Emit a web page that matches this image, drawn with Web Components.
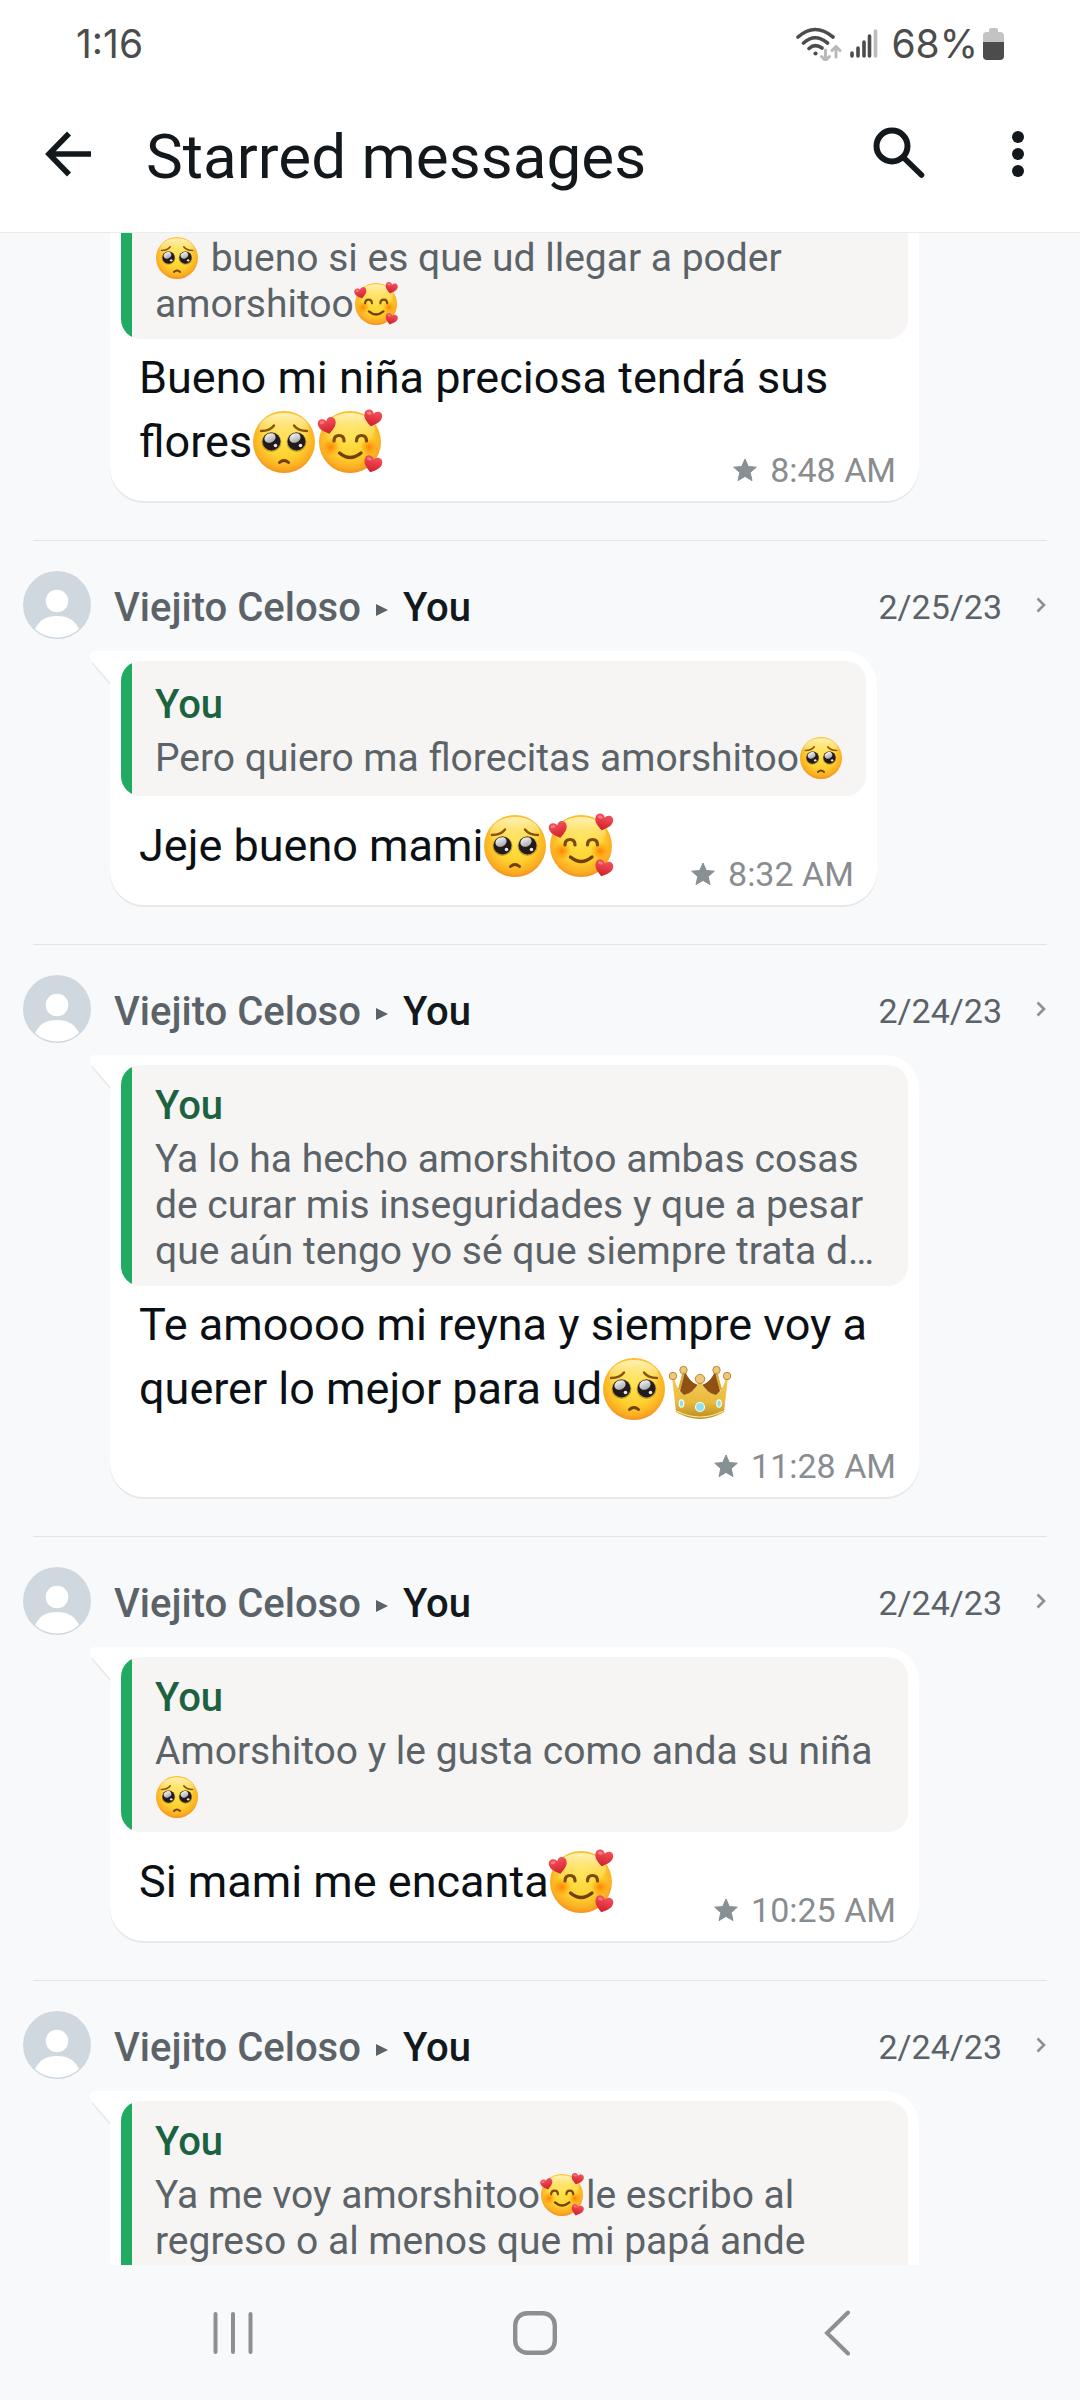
<!DOCTYPE html>
<html lang="es">
<head>
<meta charset="utf-8">
<meta name="viewport" content="width=device-width, initial-scale=1">
<title>Starred messages</title>
<style>
  html, body { margin: 0; height: 100%; }
  body {
    display: flex;
    flex-direction: column;
    overflow: hidden;
    background: #f7f9fb;
    color: #0b1014;
    font-family: Roboto, "Liberation Sans", sans-serif;
  }
</style>
</head>
<body>
<status-bar time="1:16" battery="68%"></status-bar>
<app-bar>Starred messages</app-bar>
<message-list>
  <starred-message continued time="8:48 AM"><quoted-message continued slot="quote"><emoji-icon name="pleading"></emoji-icon> bueno si es que ud llegar a poder amorshitoo<emoji-icon name="hearts"></emoji-icon></quoted-message>Bueno mi niña preciosa tendrá sus flores<emoji-icon name="pleading"></emoji-icon><emoji-icon name="hearts"></emoji-icon></starred-message>
  <starred-message from="Viejito Celoso" to="You" date="2/25/23" time="8:32 AM"><quoted-message author="You" slot="quote">Pero quiero ma florecitas amorshitoo<emoji-icon name="pleading"></emoji-icon></quoted-message>Jeje bueno mami<emoji-icon name="pleading"></emoji-icon><emoji-icon name="hearts"></emoji-icon></starred-message>
  <starred-message stacked from="Viejito Celoso" to="You" date="2/24/23" time="11:28 AM"><quoted-message author="You" slot="quote">Ya lo ha hecho amorshitoo ambas cosas de curar mis inseguridades y que a pesar que aún tengo yo sé que siempre trata d…</quoted-message>Te amoooo mi reyna y siempre voy a querer lo mejor para ud<emoji-icon name="pleading"></emoji-icon><emoji-icon name="crown"></emoji-icon></starred-message>
  <starred-message from="Viejito Celoso" to="You" date="2/24/23" time="10:25 AM"><quoted-message author="You" slot="quote">Amorshitoo y le gusta como anda su niña <emoji-icon name="pleading"></emoji-icon></quoted-message>Si mami me encanta<emoji-icon name="hearts"></emoji-icon></starred-message>
  <starred-message from="Viejito Celoso" to="You" date="2/24/23"><quoted-message open author="You" slot="quote">Ya me voy amorshitoo<emoji-icon name="hearts"></emoji-icon>le escribo al regreso o al menos que mi papá ande</quoted-message></starred-message>
</message-list>
<nav-bar></nav-bar>

<script>
const define = (name, render) => customElements.define(name, class extends HTMLElement {
  connectedCallback() {
    if (this.shadowRoot) return;
    this.attachShadow({ mode: 'open' }).innerHTML = render(this);
  }
});

const buttonReset = `button{appearance:none;border:0;margin:0;padding:0;background:none;color:inherit;font:inherit;display:flex;align-items:center;justify-content:center}svg{display:block}`;

/* ---- emoji drawings ---- */
const faceDefs = `<defs>
  <radialGradient id="face" cx=".5" cy=".42" r=".6"><stop offset="0" stop-color="#ffe24d"/><stop offset=".55" stop-color="#fdd22f"/><stop offset=".85" stop-color="#fbac22"/><stop offset="1" stop-color="#f08a1c"/></radialGradient>
  <linearGradient id="shine" x1="0" y1="0" x2="0" y2="1"><stop offset="0" stop-color="#fff6c8" stop-opacity=".9"/><stop offset="1" stop-color="#ffe66a" stop-opacity="0"/></linearGradient>
  <radialGradient id="blush"><stop offset="0" stop-color="#ff7a00" stop-opacity=".9"/><stop offset="1" stop-color="#ff8c00" stop-opacity="0"/></radialGradient>
  <linearGradient id="glint" x1="0" y1="0" x2="0" y2="1"><stop offset="0" stop-color="#f2f2f4"/><stop offset="1" stop-color="#a9a9ad"/></linearGradient>
  <linearGradient id="heart" x1="0" y1="0" x2="0" y2="1"><stop offset="0" stop-color="#f4525a"/><stop offset="1" stop-color="#cf1f2c"/></linearGradient>
  <linearGradient id="gold" x1="0" y1="0" x2="0" y2="1"><stop offset="0" stop-color="#f3cb55"/><stop offset=".6" stop-color="#e9bb3f"/><stop offset="1" stop-color="#b98a22"/></linearGradient>
</defs>`;
const face = `<circle cx="31" cy="31" r="31" fill="url(#face)"/><ellipse cx="31" cy="18" rx="25" ry="16" fill="url(#shine)"/>`;
const heart = (x, y, r) => `<g transform="translate(${x} ${y}) rotate(${r})"><path d="M0 8C-5 4.500-9 1.500-9-3.200C-9-6.500-6.800-8-4.600-8C-2.400-8-.8-6.800 0-5C.8-6.800 2.400-8 4.600-8C6.800-8 9-6.500 9-3.200C9 1.500 5 4.500 0 8Z" fill="url(#heart)"/><ellipse cx="-4.500" cy="-4.500" rx="2.500" ry="1.500" fill="#ff8d90" opacity=".7"/></g>`;
const emoji = {
  pleading: ['🥺', face + `
    <path d="M8 20Q17 20 21 14.500M54 20Q45 20 41 14.500" fill="none" stroke="#8a5208" stroke-width="2.400" stroke-linecap="round"/>
    <circle cx="18.500" cy="31" r="10" fill="#5a3a12" opacity=".35"/><circle cx="43.500" cy="31" r="10" fill="#5a3a12" opacity=".35"/>
    <circle cx="18.500" cy="30.500" r="9" fill="#231a1c"/><circle cx="43.500" cy="30.500" r="9" fill="#231a1c"/>
    <ellipse cx="17" cy="27" rx="5.800" ry="4.600" transform="rotate(-24 17 27)" fill="url(#glint)"/><ellipse cx="42" cy="27" rx="5.800" ry="4.600" transform="rotate(-24 42 27)" fill="url(#glint)"/>
    <circle cx="22.500" cy="34.500" r="1.800" fill="#e8e8ea"/><circle cx="47.500" cy="34.500" r="1.800" fill="#e8e8ea"/>
    <path d="M26.500 51.500Q31 47.500 35.500 51.500" fill="none" stroke="#704008" stroke-width="3" stroke-linecap="round"/>`],
  hearts: ['🥰', face + `
    <circle cx="12" cy="36" r="9" fill="url(#blush)"/><circle cx="50" cy="36" r="9" fill="url(#blush)"/>
    <path d="M15 30Q15 24.500 20 24.500T25 30M37.500 30Q37.500 24.500 42.500 24.500T47.500 30" fill="none" stroke="#7b4a0a" stroke-width="3.200" stroke-linecap="round"/>
    <path d="M20.500 42Q31 51 42 42" fill="none" stroke="#704008" stroke-width="3.400" stroke-linecap="round"/>`
    + heart(8.5, 15, -14) + heart(53.5, 7.5, 14) + heart(53.5, 53.5, 16)],
  crown: ['👑', `
    <path d="M14 13L11 33L17 40L29 27Q20 24 16 13ZM48 13L51 33L45 40L33 27Q42 24 46 13Z" fill="#8f5212"/>
    <path d="M15 13Q13 22 10 32M47 13Q49 22 52 32" fill="none" stroke="#d9a93a" stroke-width="2.500"/>
    <path d="M3 19L7 54Q31 68 55 54L59 19L57 19Q54 33 47 37Q37 35 32 24L30 24Q25 35 15 37Q8 33 5 19Z" fill="url(#gold)"/>
    <path d="M7.500 53Q31 65 54.500 53" fill="none" stroke="#ffe58a" stroke-width="1.200"/>
    <g fill="#edc878" stroke="#b88a35" stroke-width="1"><circle cx="4" cy="18" r="3.700"/><circle cx="14.500" cy="12" r="3.700"/><circle cx="31" cy="21" r="4.700"/><circle cx="47.500" cy="12" r="3.700"/><circle cx="58" cy="18" r="3.700"/></g>
    <g fill="#8fe0ee" stroke="#f6fbf5" stroke-width="1.200"><circle cx="31" cy="49" r="4.500"/><ellipse cx="12.500" cy="45.500" rx="2.300" ry="3.700"/><ellipse cx="50" cy="45.500" rx="2.300" ry="3.700"/></g>`]
};
define('emoji-icon', el => {
  const [label, art] = emoji[el.getAttribute('name')];
  return `<style>
    :host{display:inline-block;width:var(--emoji-size);height:var(--emoji-size);margin:var(--emoji-lead) 3px 0 1px;vertical-align:var(--emoji-drop);line-height:0}
    svg{display:block;width:100%;height:100%;overflow:visible}
  </style><svg viewBox="0 0 62 62" role="img" aria-label="${label}">${faceDefs}${art}</svg>`;
});

/* ---- system status bar ---- */
define('status-bar', el => `<style>
    :host{display:flex;flex:none;align-items:center;justify-content:space-between;box-sizing:border-box;height:76px;padding:12px 76px 0;background:#fff;color:#4c4c4c;font:400 39px/46px Inter,Roboto,sans-serif}
    .right{display:flex;align-items:center}
    svg{display:block}
    .signal{margin:0 13px 0 8px}
    .battery{margin-left:5px}
  </style>
  <span>${el.getAttribute('time')}</span>
  <div class="right">
    <svg width="46" height="34" viewBox="0 0 46 34" fill="none" stroke="#4c4c4c" stroke-width="3.600" stroke-linecap="round" aria-label="Wi-Fi">
      <path d="M2 10Q19-5 37 10M7.500 16Q19 5.500 31.500 16M13 21.500Q19 16 26 21"/><circle cx="19.500" cy="26.500" r="2.100" fill="#4c4c4c" stroke="none"/>
      <path d="M29.500 23V33M25.500 29.500L29.500 33.500L33.500 29.500M40 30V20M36 23.500L40 19.500L44 23.500" stroke="#b9b9b9" stroke-width="3"/>
    </svg>
    <svg class="signal" width="28" height="30" viewBox="0 0 28 30" stroke="#4c4c4c" stroke-width="3.600" stroke-linecap="round" aria-label="Signal">
      <path d="M2 24V27M8 19V27M14 13V27M19.500 7V27"/><path d="M25.500 2V27" stroke="#bdbdbd"/>
    </svg>
    <span>${el.getAttribute('battery')}</span>
    <svg class="battery" width="21" height="32" viewBox="0 0 21 32" aria-label="Battery">
      <path d="M8 0H13Q15 0 15 2V4H17Q21 4 21 8V14H0V8Q0 4 4 4H6V2Q6 0 8 0Z" fill="#c3c3c3"/><path d="M0 14H21V28Q21 32 17 32H4Q0 32 0 28Z" fill="#4c4c4c"/>
    </svg>
  </div>`);

/* ---- title bar ---- */
define('app-bar', () => `<style>${buttonReset}
    :host{display:flex;flex:none;align-items:center;height:156px;padding:0 48px 0 44px;background:#fff;border-bottom:1px solid #e9ebec;color:#12181c}
    h1{flex:1;margin:0;padding:6px 0 0 53px;font:400 62px/72px Roboto,sans-serif}
    .more{margin-left:79px}
  </style>
  <button aria-label="Back"><svg width="49" height="48" viewBox="0 0 49 48" fill="none" stroke="currentColor" stroke-width="5.600"><path d="M47 24H6M25 3.500L5 24L25 44.500"/></svg></button>
  <h1><slot></slot></h1>
  <button aria-label="Search"><svg width="52" height="54" viewBox="0 0 52 54" fill="none" stroke="currentColor"><circle cx="19" cy="19" r="15.500" stroke-width="6"/><path d="M31 31L48.500 48" stroke-width="5.600" stroke-linecap="round"/></svg></button>
  <button class="more" aria-label="More options"><svg width="28" height="48" viewBox="0 0 28 48" fill="currentColor"><circle cx="14" cy="7" r="6"/><circle cx="14" cy="24" r="6"/><circle cx="14" cy="41" r="6"/></svg></button>`);

/* ---- scrolling list ---- */
define('message-list', () => `<style>
    :host{display:flex;flex-direction:column;flex:1;min-height:0;overflow:hidden}
  </style><slot></slot>`);

/* ---- quoted message inside a bubble ---- */
define('quoted-message', el => {
  const author = el.getAttribute('author');
  return `<style>
    :host{display:flex;min-height:135px;border-radius:20px;overflow:hidden;background:#f6f5f4;color:#5b6368;font-size:39px;line-height:46px;--emoji-size:42px;--emoji-drop:-8px;--emoji-lead:0}
    :host([continued]){min-height:0;border-radius:0 0 20px 20px}
    :host([open]){border-radius:20px 20px 0 0}
    .bar{flex:none;width:11px;background:#21ab62}
    .content{display:flex;flex-direction:column;justify-content:center;gap:7px;padding:18px 21px 12px 23px}
    :host([continued]) .content{padding-top:2px}
    :host([open]) .content{padding-bottom:58px}
    strong{color:#1b6241;font-weight:500;font-size:40px}
  </style>
  <div class="bar"></div>
  <div class="content">${author ? `<strong>${author}</strong>` : ''}<div><slot></slot></div></div>`;
});

/* ---- one starred message ---- */
define('starred-message', el => {
  const a = n => el.getAttribute(n);
  const head = a('from') ? `<header>
      <svg class="avatar" width="68" height="68" viewBox="0 0 68 68" aria-hidden="true"><circle cx="34" cy="34" r="34" fill="#cfd8df"/><circle cx="34" cy="30" r="11.300" fill="#fff"/><path d="M12 58Q18 45 34 45T56 58Q47 66.500 34 66.500T12 58Z" fill="#fff"/></svg>
      <div class="names"><span>${a('from')}</span><svg width="12" height="12" viewBox="0 0 12 12" aria-hidden="true"><path d="M0 0L12 6L0 12Z" fill="#5b6368"/></svg><b>${a('to')}</b></div>
      <time>${a('date')}</time>
      <svg width="10" height="16" viewBox="0 0 10 16" fill="none" stroke="#8b9296" stroke-width="2.600" aria-hidden="true"><path d="M1.500 1.500L8 8L1.500 14.500"/></svg>
    </header>` : '';
  const tail = a('from') ? `<svg class="tail" width="20" height="34" viewBox="0 0 20 34" aria-hidden="true"><path d="M20 1V34L1.500 12Z" fill="#e6e8ea"/><path d="M20 0H5Q0 0 0 5Q0 8 2 10.500L20 31.500Z" fill="#fff"/></svg>` : '';
  const stamp = a('time') ? `<div class="stamp"><svg width="24" height="24" viewBox="0 0 24 24" aria-label="Starred"><path d="M12 1L15.300 8.500L23.300 9.200L17.200 14.500L19 22.600L12 18.400L5 22.600L6.800 14.500L.7 9.200L8.700 8.500Z" fill="#879095" stroke="#879095" stroke-width="1" stroke-linejoin="round"/></svg><time>${a('time')}</time></div>` : '';
  return `<style>
    :host{display:block;flex:none}
    svg{display:block;flex:none}
    hr{height:1px;margin:0 33px 30px;border:0;background:#e1e3e5}
    header{display:flex;align-items:center;padding:0 34px 12px 23px}
    .names{display:flex;align-items:center;gap:15px;flex:1;padding:6px 0 0 23px;color:#5b6368;font-weight:500;font-size:40px;line-height:46px}
    .names svg{margin-top:4px}
    b{font-weight:500;color:#12181c}
    header time{padding-top:4px;margin-right:34px;color:#5b6368;font-size:34px;line-height:40px}
    .row{display:flex;padding:0 161px 39px 110px}
    .bubble{position:relative;padding:10px 11px 0;border-radius:0 34px 34px 34px;background:#fff;box-shadow:0 2px 0 #e6e8ea}
    :host([continued]) .bubble{padding-top:0;border-radius:0 0 34px 34px}
    .tail{position:absolute;left:-20px;top:0}
    .body{display:grid;padding:12px 12px 11px 18px}
    .text{grid-area:1/1;padding-bottom:17px;font-size:45px;line-height:53px;--emoji-size:62px;--emoji-drop:-16px;--emoji-lead:7px}
    .stamp{grid-area:1/1;place-self:end;display:flex;align-items:center;gap:13px;color:#8a8d8f;font-size:34px;line-height:40px}
    :host([stacked]) .body{row-gap:9px}
    :host([stacked]) .stamp{grid-area:2/1}
  </style>
  ${head ? '<hr>' : ''}${head}
  <div class="row"><article class="bubble">${tail}<slot name="quote"></slot><div class="body"><div class="text"><slot></slot></div>${stamp}</div></article></div>`;
});

/* ---- system navigation ---- */
define('nav-bar', () => `<style>${buttonReset}
    :host{display:flex;flex:none;height:135px;padding:0 92px 0 82px;background:#f7f9fb;color:#8d8f91}
    button{flex:1}
  </style>
  <button aria-label="Recents"><svg width="42" height="44" viewBox="0 0 42 44" stroke="currentColor" stroke-width="4" stroke-linecap="round"><path d="M3.500 3V41M21 3V41M38.500 3V41"/></svg></button>
  <button aria-label="Home"><svg width="44" height="44" viewBox="0 0 44 44" fill="none" stroke="currentColor" stroke-width="4.400"><rect x="2.200" y="2.200" width="39.600" height="39.600" rx="12"/></svg></button>
  <button aria-label="Back"><svg width="28" height="46" viewBox="0 0 28 46" fill="none" stroke="currentColor" stroke-width="4" stroke-linecap="round"><path d="M25 2.500L4 23L25 43.500"/></svg></button>`);
</script>
</body>
</html>
